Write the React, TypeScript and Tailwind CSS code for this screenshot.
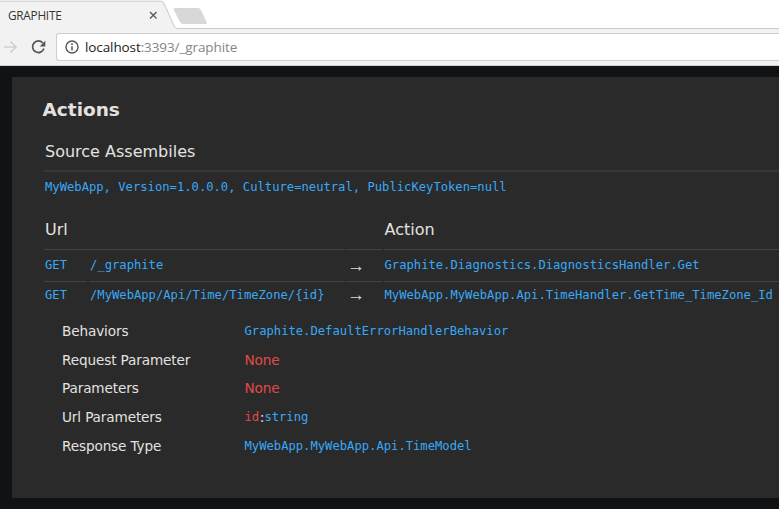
import type { ReactNode } from "react";

const mono = "font-['DejaVu_Sans_Mono',monospace] text-[12.18px] text-[#38a9f7] whitespace-pre";

function Code({ children }: { children: ReactNode }) {
  return <span className={mono}>{children}</span>;
}

function Arrow() {
  return <span className="font-['Liberation_Sans',sans-serif] text-[15px] leading-[20px] text-[#dedcda]"><span className="inline-block origin-left scale-x-120 scale-y-125">→</span></span>;
}

function None() {
  return <span className="text-[13.7px] tracking-[-0.2px] text-[#e04a46]">None</span>;
}

function Detail({ label, children }: { label: string; children: ReactNode }) {
  return (
    <div className="flex h-[28.6px] items-center pl-[18px]">
      <div className="w-[182.500px] shrink-0 text-[13.6px] tracking-[-0.12px]">{label}</div>
      <div className="flex items-center">{children}</div>
    </div>
  );
}

function BrowserChrome() {
  return (
    <header className="h-[66px] border-b border-[#d0d0d0] bg-[#f2f2f2] font-['Open_Sans',sans-serif]">
      <div className="relative h-[29px] overflow-hidden">
        <svg className="absolute inset-0" width="779" height="29" viewBox="0 0 779 29">
          <path d="M0 0H779V28.5H177Q175.500 28.500 174.500 26.500L164.500 3Q163.500 1 161.500 1H0Z" fill="#fff" />
          <path d="M0 1.200H160.500Q163 1.200 164 3.500L174 26Q175.200 28.500 177.500 28.500H779" fill="none" stroke="#c9c9c9" />
          <path d="M175.500 8H198Q200 8 201 10L206.500 22Q207.500 24 205.500 24H183Q181 24 180 22L173.800 10Q173 8 175.500 8Z" fill="#d8d8d8" />
          <path d="M150 12L156.500 18.500M156.500 12L150 18.500" fill="none" stroke="#555" strokeWidth="1.300" />
        </svg>
        <div className="relative pt-[6px] pl-[8px] text-[11.8px] leading-[18px] tracking-[-0.25px] text-[#333]">GRAPHITE</div>
      </div>
      <div className="flex h-[36px] pt-[4px]">
        <svg className="shrink-0" width="56" height="28" viewBox="0 0 56 28">
          <path d="M4 14H15.500M10.500 8.500L16 14L10.500 19.500" fill="none" stroke="#cfcfcf" strokeWidth="1.600" />
          <path d="M42.800 10A5.800 5.800 0 1 0 43.900 15.500" fill="none" stroke="#555" strokeWidth="1.700" />
          <path d="M45.300 7.800V13.400H39.700Z" fill="#555" />
        </svg>
        <div className="flex h-[28px] flex-1 items-center rounded-l-[3px] border border-r-0 border-[#cecece] bg-white pl-[8px]">
          <svg width="14" height="14" viewBox="0 0 14 14">
            <circle cx="7" cy="7" r="6" fill="none" stroke="#555" strokeWidth="1.400" />
            <path d="M7 6.200V10.500M7 3.300V5" stroke="#555" strokeWidth="1.500" />
          </svg>
          <div className="pl-[6px] text-[13.5px] leading-[20px] tracking-[-0.1px] text-[#858585]">
            <span className="text-[#222]">localhost</span>:3393/_graphite
          </div>
        </div>
      </div>
    </header>
  );
}

export default function App() {
  return (
    <div className="flex h-[509px] w-[779px] flex-col overflow-hidden bg-[#111213]">
      <BrowserChrome />
      <main className="mt-[11px] ml-[12px] h-[421px] bg-[#2a2a2a] pl-[32px] font-['DejaVu_Sans',Verdana,sans-serif] text-[#e4e2e0]">
        <h1 className="-ml-[1.5px] h-[54px] pt-[20px] text-[18.5px] leading-[26px] font-bold">Actions</h1>
        <h2 className="h-[41px] border-b-2 border-[#383838] pt-[9px] pl-[1px] text-[16px] leading-[24px]">Source Assembiles</h2>
        <div className="flex h-[29px] items-center pt-[2px] pl-[1px]"><Code>MyWebApp, Version=1.0.0.0, Culture=neutral, PublicKeyToken=null</Code></div>
        <section className="grid grid-cols-[43px_256px_35px_1fr] grid-rows-[49px_32px_28px] gap-x-[2px] text-[16px]">
          <div className="col-span-2 border-b border-[#424242] pt-[17px] pl-[1px] leading-[24px]">Url</div>
          <div className="border-b border-[#424242]" />
          <div className="border-b border-[#424242] pt-[17px] pl-[0.5px] leading-[24px]">Action</div>
          <div className="flex items-center border-b border-[#424242] pl-[1px]"><Code>GET</Code></div>
          <div className="flex items-center border-b border-[#424242] pl-[1px]"><Code>/_graphite</Code></div>
          <div className="flex items-center border-b border-[#424242]"><Arrow /></div>
          <div className="flex items-center border-b border-[#424242] pl-[0.500px]"><Code>Graphite.Diagnostics.DiagnosticsHandler.Get</Code></div>
          <div className="flex items-center pb-[2px] pl-[1px]"><Code>GET</Code></div>
          <div className="flex items-center pb-[2px] pl-[1px]"><Code>{"/MyWebApp/Api/Time/TimeZone/{id}"}</Code></div>
          <div className="flex items-center pb-[2px]"><Arrow /></div>
          <div className="flex items-center pb-[2px] pl-[0.500px]"><Code>MyWebApp.MyWebApp.Api.TimeHandler.GetTime_TimeZone_Id</Code></div>
        </section>
        <section className="pt-[7.2px]">
          <Detail label="Behaviors"><Code>Graphite.DefaultErrorHandlerBehavior</Code></Detail>
          <Detail label="Request Parameter"><None /></Detail>
          <Detail label="Parameters"><None /></Detail>
          <Detail label="Url Parameters"><Code><span className="text-[#e04a46]">id</span></Code><span className="pl-[0.500px] text-[14px]">:</span><Code>string</Code></Detail>
          <Detail label="Response Type"><Code>MyWebApp.MyWebApp.Api.TimeModel</Code></Detail>
        </section>
      </main>
    </div>
  );
}
